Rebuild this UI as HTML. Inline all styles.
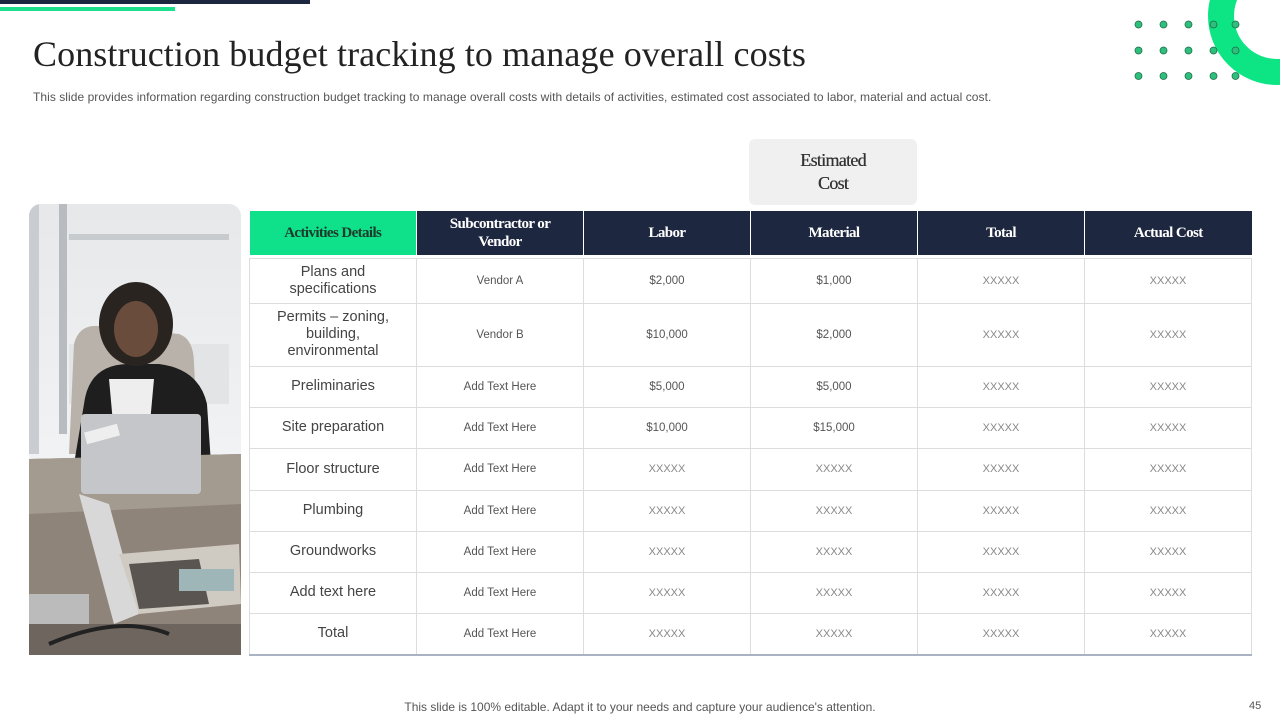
<!DOCTYPE html>
<html><head><meta charset="utf-8"><style>
*{margin:0;padding:0;box-sizing:border-box}
body{width:1280px;height:720px;background:#fff;position:relative;overflow:hidden;font-family:"Liberation Sans",sans-serif}
.abs{position:absolute}
h1{position:absolute;left:33px;top:33px;font-family:"Liberation Serif",serif;font-weight:normal;font-size:36px;color:#222;letter-spacing:0.1px;white-space:nowrap}
.sub{left:33px;top:90px;font-size:12px;color:#555;white-space:nowrap;letter-spacing:0.05px}
table{position:absolute;left:249px;top:211px;border-collapse:collapse;table-layout:fixed;width:1002px}
td,th{text-align:center;vertical-align:middle}
th{height:44px;font-family:"Liberation Serif",serif;font-weight:bold;font-size:15px;color:#fff;background:#1e2740;border-left:1px solid #fff;line-height:18px;letter-spacing:-0.6px}
th.g{background:#0fe08a;color:#1e3a2a;border-left:none}
td{border:1px solid #ddd;font-size:11.5px;color:#555}
td.a{font-size:14.5px;color:#444;line-height:17px}
td.x{color:#888;font-size:11px}
tr.sp td{height:3px;border:none}
tr.last td{border-bottom:2px solid #a9b3c3}
</style></head><body>
<div class="abs" style="left:0;top:0;width:310px;height:4px;background:#1e2740"></div>
<div class="abs" style="left:0;top:7px;width:175px;height:4px;background:#1ee08c"></div>
<svg class="abs" style="left:1120px;top:0" width="160" height="100">
<circle cx="157" cy="16" r="56" fill="none" stroke="#0de585" stroke-width="26"/>
<g fill="#2fbf7c" stroke="#1d6b48" stroke-width="0.8">
<circle cx="18.5" cy="24.5" r="3.5"/><circle cx="43.5" cy="24.5" r="3.5"/><circle cx="68.5" cy="24.5" r="3.5"/><circle cx="93.5" cy="24.5" r="3.5"/><circle cx="115.5" cy="24.5" r="3.5"/>
<circle cx="18.5" cy="50.5" r="3.5"/><circle cx="43.5" cy="50.5" r="3.5"/><circle cx="68.5" cy="50.5" r="3.5"/><circle cx="93.5" cy="50.5" r="3.5"/><circle cx="115.5" cy="50.5" r="3.5"/>
<circle cx="18.5" cy="76" r="3.5"/><circle cx="43.5" cy="76" r="3.5"/><circle cx="68.5" cy="76" r="3.5"/><circle cx="93.5" cy="76" r="3.5"/><circle cx="115.5" cy="76" r="3.5"/>
</g></svg>
<h1>Construction budget tracking to manage overall costs</h1>
<div class="abs sub">This slide provides information regarding construction budget tracking to manage overall costs with details of activities, estimated cost associated to labor, material and actual cost.</div>
<div class="abs" style="left:749px;top:139px;width:168px;height:66px;background:#f0f0f0;border-radius:6px;font-family:'Liberation Serif',serif;font-size:18px;color:#333;text-align:center;line-height:23px;padding-top:10px;letter-spacing:-0.7px">
<span style="text-shadow:0.3px 0 0 #333">Estimated<br>Cost</span></div>
<svg class="abs" style="left:29px;top:204px;border-radius:12px 12px 0 0" width="212" height="451">
<defs><linearGradient id="bg" x1="0" y1="0" x2="0" y2="1"><stop offset="0" stop-color="#e6e8ea"/><stop offset="0.6" stop-color="#f2f3f4"/></linearGradient></defs>
<rect width="212" height="451" fill="url(#bg)"/>
<rect x="0" y="0" width="10" height="250" fill="#c9ccd0"/>
<rect x="30" y="0" width="8" height="230" fill="#b8bcc0"/>
<rect x="40" y="30" width="160" height="6" fill="#c8cbce"/>
<rect x="40" y="140" width="160" height="60" fill="#e2e4e6"/>
<path d="M45 140 Q50 120 70 122 L150 130 Q165 135 165 160 L170 250 L40 250 Z" fill="#b9b2aa"/>
<path d="M55 200 Q60 160 100 160 L130 160 Q170 165 178 200 L182 260 L45 260 Z" fill="#1e1e1e"/>
<path d="M80 175 L125 175 L120 230 L85 230 Z" fill="#eeeeee"/>
<ellipse cx="107" cy="120" rx="37" ry="42" fill="#2a2420"/>
<ellipse cx="107" cy="125" rx="22" ry="28" fill="#6a4c3c"/>
<path d="M0 255 L212 250 L212 451 L0 451 Z" fill="#8f847a"/>
<path d="M0 255 L212 250 L212 300 L0 310 Z" fill="#a39a90"/>
<rect x="52" y="210" width="120" height="80" rx="4" fill="#c4c6c9"/>
<rect x="56" y="224" width="34" height="12" fill="#eee" transform="rotate(-15 73 230)"/>
<path d="M50 290 L80 300 L110 410 L85 420 Z" fill="#d8d8d8"/>
<path d="M90 350 L210 340 L212 400 L110 410 Z" fill="#cfcac2"/>
<path d="M100 360 L170 355 L180 400 L110 405 Z" fill="#5a5550"/>
<rect x="150" y="365" width="55" height="22" fill="#9fb6b8"/>
<rect x="0" y="390" width="60" height="40" fill="#bbb"/>
<rect x="0" y="420" width="212" height="31" fill="#6e655e"/>
<path d="M20 440 Q90 410 140 430" stroke="#222" stroke-width="4" fill="none"/>
</svg>
<table>
<colgroup><col style="width:167px"><col style="width:167px"><col style="width:167px"><col style="width:167px"><col style="width:167px"><col style="width:167px"></colgroup>
<tr><th class="g">Activities Details</th><th>Subcontractor or<br>Vendor</th><th>Labor</th><th>Material</th><th>Total</th><th>Actual Cost</th></tr>
<tr class="sp"><td colspan="6"></td></tr>
<tr style="height:45px"><td class="a">Plans and<br>specifications</td><td>Vendor A</td><td>$2,000</td><td>$1,000</td><td class="x">XXXXX</td><td class="x">XXXXX</td></tr>
<tr style="height:63px"><td class="a">Permits – zoning,<br>building,<br>environmental</td><td>Vendor B</td><td>$10,000</td><td>$2,000</td><td class="x">XXXXX</td><td class="x">XXXXX</td></tr>
<tr style="height:41px"><td class="a">Preliminaries</td><td>Add Text Here</td><td>$5,000</td><td>$5,000</td><td class="x">XXXXX</td><td class="x">XXXXX</td></tr>
<tr style="height:41px"><td class="a">Site preparation</td><td>Add Text Here</td><td>$10,000</td><td>$15,000</td><td class="x">XXXXX</td><td class="x">XXXXX</td></tr>
<tr style="height:42px"><td class="a">Floor structure</td><td>Add Text Here</td><td class="x">XXXXX</td><td class="x">XXXXX</td><td class="x">XXXXX</td><td class="x">XXXXX</td></tr>
<tr style="height:41px"><td class="a">Plumbing</td><td>Add Text Here</td><td class="x">XXXXX</td><td class="x">XXXXX</td><td class="x">XXXXX</td><td class="x">XXXXX</td></tr>
<tr style="height:41px"><td class="a">Groundworks</td><td>Add Text Here</td><td class="x">XXXXX</td><td class="x">XXXXX</td><td class="x">XXXXX</td><td class="x">XXXXX</td></tr>
<tr style="height:41px"><td class="a">Add text here</td><td>Add Text Here</td><td class="x">XXXXX</td><td class="x">XXXXX</td><td class="x">XXXXX</td><td class="x">XXXXX</td></tr>
<tr class="last" style="height:42px"><td class="a">Total</td><td>Add Text Here</td><td class="x">XXXXX</td><td class="x">XXXXX</td><td class="x">XXXXX</td><td class="x">XXXXX</td></tr>
</table>
<div class="abs" style="left:0;width:1280px;top:700px;text-align:center;font-size:12px;color:#555">This slide is 100% editable. Adapt it to your needs and capture your audience's attention.</div>
<div class="abs" style="left:1249px;top:700px;font-size:11px;color:#555">45</div>
</body></html>
